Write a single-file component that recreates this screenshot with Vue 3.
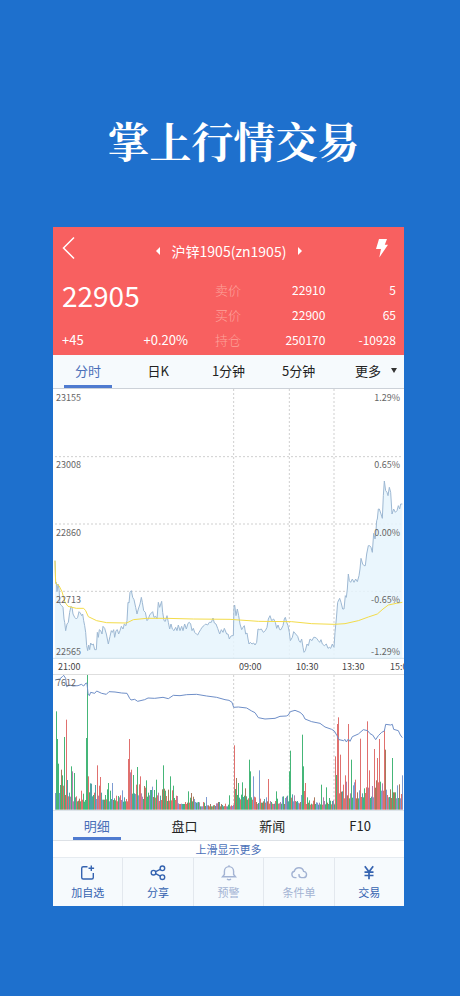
<template>
  <div class="page">
    <h1 class="slogan">掌上行情交易</h1>

    <main class="phone">
      <header class="quote">
        <div class="nav-bar">
          <button class="icon-button" type="button" aria-label="返回">
            <svg width="14" height="24" viewBox="0 0 14 24">
              <path d="M12 1.500L1.500 12L12 22.500" fill="none" stroke="#fff" stroke-width="1.500" />
            </svg>
          </button>
          <div class="contract">
            <button class="icon-button" type="button" aria-label="上一个合约">
              <svg width="4" height="8" viewBox="0 0 4 8"><path d="M4 0V8L0 4Z" fill="#fff" /></svg>
            </button>
            <span class="contract-name">沪锌1905(zn1905)</span>
            <button class="icon-button" type="button" aria-label="下一个合约">
              <svg width="4" height="8" viewBox="0 0 4 8"><path d="M0 0V8L4 4Z" fill="#fff" /></svg>
            </button>
          </div>
          <button class="icon-button" type="button" aria-label="快速下单">
            <svg width="14" height="20" viewBox="0 0 14 20">
              <path d="M4 1H12L9.800 6.800H13L4.300 19.500L6 11H1Z" fill="#fff" />
            </svg>
          </button>
        </div>

        <div class="quote-body">
          <div class="last">
            <strong class="last-price">22905</strong>
            <div class="change">
              <span>+45</span>
              <span>+0.20%</span>
            </div>
          </div>
          <table class="depth">
            <tbody>
              <tr v-for="row in depth" :key="row.label">
                <th scope="row">{{ row.label }}</th>
                <td class="depth-price">{{ row.price }}</td>
                <td>{{ row.amount }}</td>
              </tr>
            </tbody>
          </table>
        </div>
      </header>

      <nav class="tabs period-tabs">
        <button
          v-for="item in periods"
          :key="item"
          type="button"
          class="tab"
          :class="{ active: item === period, 'has-caret': item === '更多' }"
          @click="period = item"
        >
          <span>{{ item }}</span>
          <svg v-if="item === '更多'" width="6" height="5" viewBox="0 0 6 5">
            <path d="M0 0H6L3 5Z" fill="#333" />
          </svg>
        </button>
      </nav>

      <section class="chart price-chart">
        <svg viewBox="0 0 1053 810" preserveAspectRatio="none">
          <g class="grid">
            <path v-for="y in gridRows" :key="'r' + y" :d="`M6 ${y}H1047`" />
            <path v-for="x in gridCols" :key="'c' + x" :d="`M${x} 0V808`" />
          </g>
          <polygon :points="`6,808 ${priceLine} 1048,808`" class="price-area" />
          <polyline :points="priceLine" class="price-line" />
          <polyline :points="averageLine" class="average-line" />
          <path d="M0 808H1053" class="base-line" />
        </svg>
        <ul class="scale scale-left">
          <li v-for="v in priceScale" :key="v">{{ v }}</li>
        </ul>
        <ul class="scale scale-right">
          <li v-for="v in percentScale" :key="v">{{ v }}</li>
        </ul>
      </section>

      <div class="time-axis">
        <span v-for="t in times" :key="t">{{ t }}</span>
      </div>

      <section class="chart volume-chart">
        <svg viewBox="0 0 1053 405" preserveAspectRatio="none">
          <g class="grid">
            <path v-for="x in gridCols" :key="x" :d="`M${x} 0V404`" />
          </g>
          <rect
            v-for="(bar, i) in bars"
            :key="i"
            :x="bar.x"
            :y="404 - bar.h"
            width="3"
            :height="bar.h"
            :fill="bar.color"
          />
          <polyline :points="interestLine" class="interest-line" />
        </svg>
        <span class="volume-max">7612</span>
      </section>

      <nav class="tabs detail-tabs">
        <button
          v-for="item in details"
          :key="item"
          type="button"
          class="tab"
          :class="{ active: item === detail }"
          @click="detail = item"
        >
          <span>{{ item }}</span>
        </button>
      </nav>

      <a class="more" href="#">上滑显示更多</a>

      <footer class="actions">
        <button type="button" class="action">
          <svg viewBox="0 0 18 18">
            <path d="M8.500 2.700H4.200Q2.700 2.700 2.700 4.200V13.500Q2.700 15 4.200 15H12.800Q14.300 15 14.300 13.500V9M12.300 1.500V7M9.500 4.300H15.100" />
          </svg>
          <span>加自选</span>
        </button>
        <button type="button" class="action">
          <svg viewBox="0 0 18 18">
            <circle cx="4.500" cy="8.700" r="2.300" />
            <circle cx="13.400" cy="4.300" r="2.300" />
            <circle cx="13.400" cy="13.200" r="2.300" />
            <path d="M6.600 7.700L11.300 5.300M6.600 9.700L11.300 12.200" />
          </svg>
          <span>分享</span>
        </button>
        <button type="button" class="action" disabled>
          <svg viewBox="0 0 18 18">
            <path d="M2.500 12.800H15.500L13.600 10.500V7.200A4.600 4.600 0 0 0 4.400 7.200V10.500ZM9 2.500V1.300M7 15Q9 16.500 11 15" />
          </svg>
          <span>预警</span>
        </button>
        <button type="button" class="action" disabled>
          <svg viewBox="0 0 18 18">
            <path d="M6.500 13.600H5A3.200 3.200 0 0 1 4.300 7.300A4.800 4.800 0 0 1 13.600 7.400A3.100 3.100 0 0 1 13.300 13.600H11.500Q9 13.600 9 11.100V10.100" />
          </svg>
          <span>条件单</span>
        </button>
        <button type="button" class="action">
          <svg class="yen" viewBox="0 0 18 18">
            <path d="M4.800 2.300L9 7.800L13.200 2.300M9 7.800V15.200M4.500 8.200H13.500M4.500 11.500H13.500" />
          </svg>
          <span>交易</span>
        </button>
      </footer>
    </main>
  </div>
</template>

<script setup>
import { ref } from 'vue';

const period = ref('分时');
const detail = ref('明细');

const periods = ['分时', '日K', '1分钟', '5分钟', '更多'];
const details = ['明细', '盘口', '新闻', 'F10'];
const times = ['21:00', '09:00', '10:30', '13:30', '15:00'];
const priceScale = ['23155', '23008', '22860', '22713', '22565'];
const percentScale = ['1.29%', '0.65%', '0.00%', '-0.65%', '-1.29%'];

const depth = [
  { label: '卖价', price: '22910', amount: '5' },
  { label: '买价', price: '22900', amount: '65' },
  { label: '持仓', price: '250170', amount: '-10928' },
];

const gridRows = [203, 405, 607];
const gridCols = [542, 709, 843];

// 分时价格
const priceLine =
  '6,515 8,583 10,580 12,608 15,585 18,600 21,645 26,650 30,655 33,690 35,700 38,725 42,705 46,700 50,670 54,652 ' +
  '57,655 60,675 65,685 70,690 74,685 78,668 82,672 86,680 89,675 92,695 95,710 98,730 101,770 104,785 107,768 ' +
  '110,782 113,762 117,768 121,765 125,782 130,782 133,730 136,745 139,722 143,725 147,735 150,712 155,718 160,735 ' +
  '166,765 171,742 175,725 178,730 182,722 185,745 189,725 193,722 197,735 201,725 205,712 210,720 214,705 219,710 ' +
  '222,695 225,640 228,642 231,610 235,605 239,625 243,632 248,655 252,675 256,660 261,645 265,625 268,640 272,665 ' +
  '277,670 282,695 286,690 290,678 295,672 299,668 303,685 308,682 312,690 316,640 320,655 326,637 329,670 333,695 ' +
  '337,697 342,680 346,700 350,720 354,705 358,720 363,725 368,715 372,725 376,708 381,725 386,712 390,725 395,705 ' +
  '400,720 405,703 409,700 413,705 417,725 421,718 425,730 430,735 434,738 438,730 443,722 447,715 453,710 458,705 ' +
  '464,708 469,700 475,700 480,687 484,702 489,705 494,718 500,735 505,722 510,730 514,718 521,735 525,735 529,750 ' +
  '533,742 537,740 541,740 543,655 545,648 549,680 553,660 557,680 561,705 566,722 570,715 574,710 578,735 582,732 ' +
  '585,750 588,765 592,760 597,765 602,762 606,768 611,760 615,720 620,722 625,720 631,730 637,725 642,715 646,690 ' +
  '651,680 656,695 662,690 667,700 671,718 675,708 680,722 684,722 690,710 694,690 697,685 701,700 705,710 709,730 ' +
  '712,755 718,745 722,728 728,735 734,742 738,755 742,760 746,750 750,775 753,790 757,785 762,765 766,770 771,750 ' +
  '777,755 782,745 786,745 791,748 796,755 800,760 804,752 808,765 814,770 820,765 825,778 829,775 833,778 838,765 ' +
  '841,772 843,775 846,730 850,690 854,640 860,628 864,640 869,660 873,660 877,620 880,625 883,600 886,555 889,575 ' +
  '893,580 898,570 903,580 908,570 913,578 918,560 921,540 924,508 929,525 933,530 937,530 941,495 946,470 950,470 ' +
  '954,475 958,490 962,433 966,450 968,440 971,395 973,390 976,360 979,360 984,375 988,388 991,320 994,276 998,305 ' +
  '1002,310 1005,320 1009,295 1013,310 1017,375 1022,360 1027,370 1032,365 1036,350 1040,360 1043,345 1048,345';

// 均价
const averageLine =
  '6,515 8,583 18,590 27,608 36,640 45,652 70,658 92,658 98,665 106,683 131,695 161,701 221,702 241,692 281,688 ' +
  '341,688 421,690 531,691 616,697 716,698 776,704 843,706 876,704 916,695 946,684 973,675 990,660 1006,648 ' +
  '1030,643 1048,640';

// 持仓量
const interestLine =
  '6,15 20,12 28,5 32,1 38,10 41,35 50,30 60,33 75,32 85,28 92,33 99,24 102,25 105,55 109,62 113,52 125,55 131,48 ' +
  '146,55 160,58 168,50 186,51 206,54 222,55 230,70 234,75 245,73 254,79 275,74 285,69 305,70 330,67 346,71 361,61 ' +
  '381,62 401,59 431,58 461,63 491,67 516,74 528,76 537,82 542,97 556,96 581,99 596,108 606,113 616,128 636,132 ' +
  '666,130 681,124 700,123 706,120 712,110 726,106 741,112 750,120 756,132 776,140 801,145 816,156 836,163 844,168 ' +
  '852,182 858,194 872,197 876,193 880,201 886,192 891,199 898,185 916,177 931,164 944,167 951,176 959,180 968,194 ' +
  '976,182 986,172 994,168 998,148 1013,150 1018,148 1022,163 1036,167 1042,180 1048,188';

const GREEN = '#45b678';
const RED = '#e0706e';
const BLUE = '#7d9bd2';
const BROWN = '#a8795c';
const PURPLE = '#b07fae';
const TEAL = '#4fa3a5';
const palette = [GREEN, RED, BROWN, GREEN, BLUE, RED, TEAL, PURPLE];

// 各时段成交量的大致上限：[结束位置, 高度]
const levels = [
  [30, 125], [58, 95], [100, 60], [118, 95], [165, 75], [222, 60], [250, 115], [300, 80], [372, 65], [430, 42],
  [540, 24], [560, 90], [605, 75], [700, 42], [720, 60], [745, 45], [758, 75], [843, 38], [870, 120], [960, 85],
  [1000, 130], [1050, 85],
];

// 放量柱
const spikes = [
  [9, 295, GREEN], [12, 212, GREEN], [15, 138, GREEN], [24, 120, BROWN], [33, 218, GREEN], [39, 270, RED],
  [54, 130, GREEN], [57, 115, PURPLE], [63, 110, GREEN], [99, 215, GREEN], [102, 404, GREEN], [105, 100, RED],
  [132, 133, RED], [141, 98, RED], [165, 80, GREEN], [177, 80, BLUE], [225, 152, RED], [228, 212, RED],
  [234, 120, RED], [240, 104, GREEN], [252, 128, GREEN], [261, 100, RED], [279, 88, GREEN], [309, 90, GREEN],
  [330, 133, GREEN], [351, 100, GREEN], [360, 72, GREEN], [405, 55, GREEN], [414, 50, BROWN], [459, 38, BLUE],
  [528, 43, GREEN], [543, 193, RED], [549, 95, BROWN], [567, 82, GREEN], [588, 150, GREEN], [591, 115, GREEN],
  [600, 100, BLUE], [618, 118, BLUE], [645, 92, RED], [669, 55, GREEN], [708, 115, GREEN], [711, 177, GREEN],
  [747, 225, GREEN], [750, 130, GREEN], [756, 80, RED], [804, 75, GREEN], [819, 67, GREEN], [846, 160, RED],
  [852, 257, RED], [855, 277, RED], [861, 165, RED], [876, 103, RED], [885, 257, RED], [894, 150, GREEN],
  [906, 90, RED], [921, 213, RED], [942, 265, RED], [948, 118, RED], [963, 182, RED], [972, 155, RED],
  [978, 212, RED], [993, 240, RED], [996, 180, BROWN], [1017, 155, GREEN], [1047, 103, BLUE],
];

const buildBars = () => {
  const result = [];
  let seed = 1905;
  const random = () => {
    seed = (seed * 16807) % 2147483647;
    return seed / 2147483647;
  };
  for (let x = 6; x < 1050; x += 3) {
    const limit = levels.find(([end]) => x <= end)[1];
    const value = random();
    const color = palette[Math.floor(random() * palette.length)];
    const spike = spikes.find((s) => s[0] >= x && s[0] < x + 3);
    result.push(
      spike
        ? { x, h: spike[1], color: spike[2] }
        : { x, h: Math.round(limit * (0.4 + 0.6 * value * value)), color }
    );
  }
  return result;
};

const bars = buildBars();
</script>

<style>
body {
  background: #1e70cd;
}
</style>

<style scoped>
.page {
  box-sizing: border-box;
  min-height: 100vh;
  padding: 109px 56px 90px 53px;
  background: #1e70cd;
  color: #222;
  font-family: "Noto Sans CJK SC", sans-serif;
}

button {
  padding: 0;
  border: 0;
  background: none;
  color: inherit;
  font: inherit;
  cursor: pointer;
}

.slogan {
  margin: 0 0 56px;
  padding-left: 10px;
  color: #fff;
  font-family: "Noto Serif CJK SC", "Noto Sans CJK SC", serif;
  font-size: 42px;
  font-weight: 700;
  line-height: 62px;
  text-align: center;
  white-space: nowrap;
}

.phone {
  overflow: hidden;
  background: #fff;
}

/* 行情头部 */
.quote {
  padding: 0 8px 3px 9px;
  background: #f86060;
  color: #fff;
}

.nav-bar {
  display: grid;
  grid-template-columns: 1fr auto 1fr;
  align-items: center;
  height: 50px;
}

.icon-button {
  display: flex;
  align-items: center;
}

.nav-bar > .icon-button {
  height: 42px;
  align-self: start;
}

.nav-bar > .icon-button:last-child {
  margin-right: 7px;
  justify-self: end;
}

.contract {
  display: flex;
  align-items: center;
  gap: 12px;
  padding-bottom: 2px;
}

.contract-name {
  font-size: 14px;
  line-height: 24px;
}

.quote-body {
  display: flex;
  gap: 27px;
}

.last {
  display: flex;
  flex: 126;
  flex-direction: column;
  justify-content: space-between;
}

.last-price {
  font-size: 28px;
  font-weight: 400;
  line-height: 36px;
}

.change {
  display: flex;
  justify-content: space-between;
  font-size: 13px;
  line-height: 25px;
}

.depth {
  flex: 181;
  border-collapse: collapse;
  font-size: 12px;
  line-height: 25px;
}

.depth th,
.depth td {
  padding: 0;
  font-weight: 400;
  text-align: right;
}

.depth th {
  width: 15%;
  color: #fda29b;
  font-size: 13px;
  font-weight: 300;
  text-align: left;
  white-space: nowrap;
}

.depth td {
  width: 39%;
}

.depth .depth-price {
  width: 46%;
}

/* 标签栏 */
.tabs {
  display: grid;
  grid-auto-columns: minmax(0, 1fr);
  grid-auto-flow: column;
  background: #f6fafd;
}

.tab {
  display: flex;
  position: relative;
  align-items: center;
  justify-content: center;
  gap: 10px;
  font-size: 13px;
}

.tab.has-caret {
  justify-content: flex-end;
  padding-right: 7px;
}

.tab.active {
  color: #4a6fb8;
}

.tab.active::after {
  position: absolute;
  bottom: 0;
  left: 50%;
  width: 48px;
  height: 3px;
  margin-left: -24px;
  background: #4f7bd0;
  content: "";
}

.period-tabs {
  height: 33px;
  border-bottom: 1px solid #ccd1d8;
}

.period-tabs .tab {
  padding-bottom: 2px;
}

.detail-tabs {
  height: 29px;
  border-top: 1px solid #dde4ea;
  border-bottom: 1px solid #dde1e6;
}

/* 图表 */
.chart {
  position: relative;
}

.chart svg {
  display: block;
  width: 100%;
}

.price-chart svg {
  height: 270px;
}

.volume-chart svg {
  height: 135px;
}

.chart polyline,
.chart path {
  fill: none;
  stroke-width: 1px;
  vector-effect: non-scaling-stroke;
}

.grid path {
  stroke: #cfcfcf;
  stroke-dasharray: 2 2;
}

.price-area {
  fill: #e6f4fd;
  fill-opacity: 0.85;
}

.chart .price-line {
  stroke: #9db8d3;
}

.chart .average-line {
  stroke: #f3dc4a;
}

.chart .base-line {
  stroke: #cfe0ea;
}

.chart .interest-line {
  stroke: #6f8fc8;
}

.scale {
  display: grid;
  position: absolute;
  top: 0;
  bottom: 0;
  grid-template-rows: repeat(3, 1fr) 52px 15px;
  margin: 0;
  padding: 1px 0 0;
  color: #666;
  font-size: 9px;
  line-height: 15px;
  list-style: none;
}

.scale-left {
  left: 3px;
}

.scale-right {
  right: 4px;
  text-align: right;
}

.time-axis {
  display: grid;
  grid-template-columns:
    minmax(0, 181fr) minmax(0, 57fr) minmax(0, 46fr)
    minmax(0, 48fr) minmax(0, 14fr);
  padding-left: 5px;
  border-bottom: 1px solid #dedede;
  color: #444;
  font-size: 9px;
  line-height: 15px;
  white-space: nowrap;
}

.volume-max {
  position: absolute;
  top: 0;
  left: 3px;
  color: #666;
  font-size: 9px;
  line-height: 15px;
}

.more {
  display: block;
  color: #4a6fb8;
  font-size: 11px;
  line-height: 16px;
  text-align: center;
  text-decoration: none;
}

/* 底部操作栏 */
.actions {
  display: flex;
  border-top: 1px solid #e6ebf0;
  background: #f6fafd;
}

.action {
  display: flex;
  flex: 1;
  flex-direction: column;
  align-items: center;
  height: 48px;
  padding-top: 6px;
  color: #3563b0;
  font-size: 11px;
  line-height: 20px;
}

.action + .action {
  border-left: 1px solid #e3e8ee;
}

.action:disabled {
  color: #a3b3d3;
}

.action svg {
  width: 18px;
  height: 18px;
  fill: none;
  stroke: currentColor;
  stroke-width: 1.400;
}

.action .yen {
  stroke-width: 1.700;
}
</style>
